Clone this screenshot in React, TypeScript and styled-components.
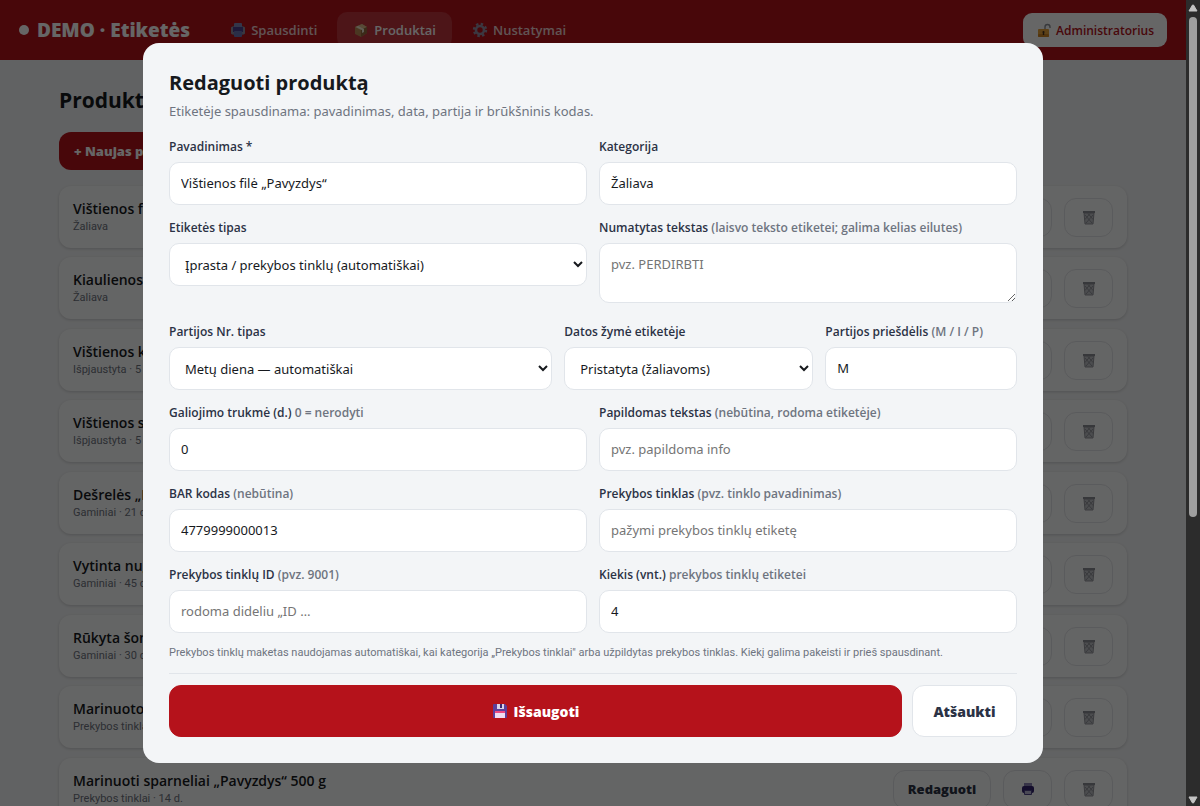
import React, { useId } from "react";
import styled, { createGlobalStyle, css } from "styled-components";

const Global = createGlobalStyle`
  *, *::before, *::after { box-sizing: border-box; }
  body {
    margin: 0;
    background: #f3f5f7;
    color: #16191d;
    font-family: "Open Sans", "Noto Sans", sans-serif;
    font-size: 13px;
  }
  button, input, select, textarea { font-family: inherit; }
  h1, h2, h3, p { margin: 0; }
`;

const red = "#b5121b";
const line = "#e1e5ea";
const ink = "#2b3245";
const muted = "#6e7480";

/* ---------- window frame ---------- */

const Frame = styled.div`
  display: grid;
  grid-template-columns: minmax(0, 1fr) 14px;
  height: 100vh;
  overflow: hidden;
`;

const Viewport = styled.div`
  position: relative;
  overflow: hidden;
`;

const ScrollTrack = styled.div`
  display: flex;
  flex-direction: column;
  align-items: center;
  gap: 5px;
  padding: 4px 0 2px;
  background: #2c2c2c;
`;

const ScrollThumb = styled.div`
  width: 8px;
  height: 62vh;
  margin-bottom: auto;
  border-radius: 4px;
  background: #9f9f9f;
`;

/* ---------- page behind the dialog ---------- */

const TopBar = styled.header`
  display: flex;
  align-items: center;
  gap: 24px;
  height: 60px;
  padding: 0 19px;
  background: ${red};
  color: #fff;
`;

const Brand = styled.div`
  display: flex;
  align-items: center;
  gap: 8px;
  font-size: 19px;
  font-weight: 800;
  line-height: 24px;
  white-space: nowrap;
`;

const BrandDot = styled.span`
  width: 10px;
  height: 10px;
  border-radius: 50%;
  background: #fff;
`;

const Nav = styled.nav`
  display: flex;
  flex: 1;
  gap: 4px;
`;

const NavLink = styled.a<{ $active?: boolean }>`
  display: flex;
  align-items: center;
  gap: 5px;
  height: 36px;
  padding: 0 16px;
  border-radius: 10px;
  color: ${(p) => (p.$active ? "#fff" : "rgba(255, 255, 255, 0.82)")};
  background: ${(p) => (p.$active ? "rgba(255, 255, 255, 0.15)" : "transparent")};
  font-size: 13px;
  font-weight: 600;
  text-decoration: none;
`;

const AdminButton = styled.button`
  display: flex;
  align-items: center;
  gap: 4px;
  height: 34px;
  padding: 0 13px;
  border: 0;
  border-radius: 9px;
  background: #fff;
  color: ${red};
  font-size: 12px;
  font-weight: 600;
`;

const Main = styled.main`
  display: flex;
  flex-direction: column;
  align-items: flex-start;
  max-width: 1100px;
  margin: 0 auto;
  padding: 24px 16px;
`;

const PageTitle = styled.h1`
  font-size: 21px;
  font-weight: 700;
  line-height: 32px;
`;

const NewButton = styled.button`
  height: 38px;
  margin: 16px 0;
  padding: 0 15px;
  border: 0;
  border-radius: 12px;
  background: ${red};
  color: #fff;
  font-size: 13px;
  font-weight: 800;
`;

const List = styled.ul`
  align-self: stretch;
  margin: 0;
  padding: 0;
  list-style: none;
`;

const Row = styled.li`
  display: flex;
  align-items: center;
  gap: 12px;
  height: 62px;
  margin-bottom: 9px;
  padding: 0 14px;
  border-radius: 12px;
  background: #fbfcfc;
  box-shadow: 0 1px 3px rgba(20, 25, 35, 0.18);

  &:nth-child(even) {
    margin-bottom: 10px;
  }
`;

const RowText = styled.div`
  flex: 1;
`;

const RowName = styled.h3`
  font-size: 14px;
  font-weight: 600;
  line-height: 20px;
`;

const RowMeta = styled.p`
  color: ${muted};
  font-family: Roboto, "Open Sans", sans-serif;
  font-size: 11px;
  line-height: 16px;
`;

const RowButton = styled.button<{ $wide?: boolean }>`
  display: flex;
  align-items: center;
  justify-content: center;
  min-width: ${(p) => (p.$wide ? 98 : 49)}px;
  height: 39px;
  border: 1px solid #e1e4e8;
  border-radius: 12px;
  background: #fbfcfc;
  color: ${ink};
  font-size: 13px;
  font-weight: 800;
`;

/* ---------- dialog ---------- */

const Overlay = styled.div`
  position: absolute;
  inset: 0;
  display: flex;
  align-items: center;
  justify-content: center;
  background: rgba(0, 0, 0, 0.6);
`;

const Dialog = styled.form`
  display: flex;
  flex-direction: column;
  width: 100%;
  max-width: 900px;
  padding: 24px 26px 26px;
  border-radius: 16px;
  background: #f3f5f7;
`;

const DialogTitle = styled.h2`
  font-size: 20px;
  font-weight: 700;
  line-height: 32px;
`;

const DialogText = styled.p`
  margin: 2px 0 17px;
  color: ${muted};
  font-family: "Noto Sans", sans-serif;
  line-height: 20px;
`;

const Fields = styled.div`
  display: flex;
  flex-direction: column;
  gap: 14px;
`;

const FieldRow = styled.div<{ $cols?: string }>`
  display: grid;
  grid-template-columns: ${(p) => p.$cols ?? "1fr 1fr"};
  align-items: start;
  gap: 12px;
`;

const FieldBox = styled.div`
  display: flex;
  flex-direction: column;
  gap: 6px;
  min-width: 0;
`;

const Label = styled.label`
  color: ${ink};
  font-size: 12px;
  font-weight: 600;
  line-height: 18px;
  white-space: nowrap;
`;

const LabelNote = styled.span`
  color: ${muted};
`;

const control = css`
  width: 100%;
  height: 43px;
  border: 1px solid ${line};
  border-radius: 10px;
  outline: 0;
  background: #fff;
  color: #16191d;
  font-family: "Noto Sans", sans-serif;
  font-size: 13px;

  &::placeholder {
    color: #757575;
    opacity: 1;
  }
`;

const Input = styled.input`
  ${control}
  padding: 0 11px 1px;
`;

const Select = styled.select`
  ${control}
  padding: 0 0 0 11px;
`;

const TextArea = styled.textarea`
  ${control}
  height: 60px;
  margin-bottom: 6px;
  padding: 11px;
  line-height: 18px;
  resize: vertical;
`;

const Hint = styled.p`
  margin: 12px 0;
  color: ${muted};
  font-family: Roboto, "Open Sans", sans-serif;
  font-size: 11px;
  line-height: 16px;
`;

const Actions = styled.div`
  display: flex;
  gap: 10px;
  padding-top: 11px;
  border-top: 1px solid ${line};
`;

const ActionButton = styled.button<{ $primary?: boolean }>`
  display: flex;
  flex: ${(p) => (p.$primary ? "1" : "0 0 105px")};
  align-items: center;
  justify-content: center;
  gap: 6px;
  height: 52px;
  border: 1px solid ${(p) => (p.$primary ? red : line)};
  border-radius: 12px;
  background: ${(p) => (p.$primary ? red : "#fff")};
  color: ${(p) => (p.$primary ? "#fff" : ink)};
  font-size: 14px;
  font-weight: 800;
`;

/* ---------- icons ---------- */

const PrinterIcon = ({ size = 16 }: { size?: number }) => (
  <svg width={size} height={size} viewBox="0 0 16 16" aria-hidden="true">
    <rect x="1" y="4" width="14" height="9" rx="3" fill="#77728c" />
    <rect x="1" y="5" width="3" height="7" rx="1" fill="#928ca0" />
    <rect x="12" y="5" width="3" height="7" rx="1" fill="#928ca0" />
    <rect x="4" y="1" width="8" height="5" rx="1" fill="#8088b8" />
    <rect x="3" y="5" width="10" height="5" fill="#4b3f8f" />
    <rect x="4" y="9" width="8" height="6" rx="1" fill="#6a74b4" />
  </svg>
);

const SmallPrinterIcon = () => (
  <svg width="14" height="14" viewBox="0 0 14 14" aria-hidden="true">
    <rect x="3" y="1" width="8" height="4" fill="#8a83b4" />
    <rect x="1" y="4" width="12" height="7" rx="2" fill="#33246f" />
    <rect x="3" y="8" width="8" height="5" rx="1" fill="#4e4488" />
    <rect x="4" y="9" width="6" height="3" fill="#b9b6d4" />
  </svg>
);

const BoxIcon = () => (
  <svg width="16" height="16" viewBox="0 0 16 16" aria-hidden="true">
    <path d="M2 5 9 2l5 3v6l-6 4-6-3z" fill="#b98a55" />
    <path d="M2 5 9 2l5 3-6 3z" fill="#dcb98a" />
    <path d="M8 8v7l6-4V5z" fill="#936a3c" />
    <path d="m5 4 6 3v3l-2 1V8L3 5z" fill="#efe6d3" />
  </svg>
);

const GearIcon = () => (
  <svg width="16" height="16" viewBox="0 0 16 16" aria-hidden="true">
    <g fill="none" stroke="#948da3">
      <circle cx="8" cy="8" r="4" strokeWidth="2.6" />
      <circle cx="8" cy="8" r="6" strokeWidth="2.4" strokeDasharray="2.4 2.31" />
    </g>
  </svg>
);

const LockIcon = () => (
  <svg width="16" height="16" viewBox="0 0 16 16" aria-hidden="true">
    <path d="M9 7V5a2.5 2.5 0 0 1 5 0v1" fill="none" stroke="#8d8f96" strokeWidth="1.4" />
    <rect x="2" y="7" width="11" height="8" rx="1" fill="#e9a33a" />
    <rect x="2" y="12" width="11" height="3" rx="1" fill="#cf8425" />
    <path d="M7.5 9a1 1 0 0 1 .7 1.800V13H6.800v-2.200A1 1 0 0 1 7.500 9z" fill="#4a3420" />
  </svg>
);

const SaveIcon = () => (
  <svg width="16" height="16" viewBox="0 0 16 16" aria-hidden="true">
    <path d="M2 1h11l2 2v11a1 1 0 0 1-1 1H2a1 1 0 0 1-1-1V2a1 1 0 0 1 1-1z" fill="#5b3f9c" />
    <rect x="5" y="1" width="7" height="5" fill="#d9d3ea" />
    <rect x="8" y="1" width="2" height="4" fill="#3b2a72" />
    <rect x="3" y="8" width="10" height="7" fill="#f0dcf2" />
    <rect x="3" y="8" width="10" height="2" fill="#ee4a82" />
  </svg>
);

const TrashIcon = () => (
  <svg width="14" height="15" viewBox="0 0 14 15" aria-hidden="true">
    <path d="M2 3h10l-1 11H3z" fill="#bfc1c6" />
    <rect x="1" y="1" width="12" height="2" fill="#8a8c93" />
    <g stroke="#8a8c93" strokeWidth="0.9" fill="none">
      <path d="M2 3h10l-1 11H3z" />
      <path d="m3 5 7 8M6 3.500l5 6M11 5l-7 8M8 3.500l-5 6" />
    </g>
  </svg>
);

const ArrowIcon = ({ down }: { down?: boolean }) => (
  <svg width="10" height="8" viewBox="0 0 10 8" aria-hidden="true">
    <path d={down ? "M1 1h8L5.500 7h-1z" : "M1 7h8L5.500 1h-1z"} fill="#c4c4c4" stroke="#c4c4c4" strokeLinejoin="round" />
  </svg>
);

/* ---------- form field ---------- */

type FieldProps = {
  label: string;
  note?: string;
  kind?: "input" | "select" | "textarea";
  value?: string;
  placeholder?: string;
};

function Field({ label, note, kind = "input", value, placeholder }: FieldProps) {
  const id = useId();
  return (
    <FieldBox>
      <Label htmlFor={id}>
        {label}
        {note && <LabelNote> {note}</LabelNote>}
      </Label>
      {kind === "input" && <Input id={id} defaultValue={value} placeholder={placeholder} />}
      {kind === "textarea" && <TextArea id={id} defaultValue={value} placeholder={placeholder} />}
      {kind === "select" && (
        <Select id={id}>
          <option>{value}</option>
        </Select>
      )}
    </FieldBox>
  );
}

const products = [
  { name: "Vištienos filė", meta: "Žaliava" },
  { name: "Kiaulienos", meta: "Žaliava" },
  { name: "Vištienos ketv.", meta: "Išpjaustyta · 5 d." },
  { name: "Vištienos sp.", meta: "Išpjaustyta · 5 d." },
  { name: "Dešrelės „P“", meta: "Gaminiai · 21 d." },
  { name: "Vytinta nugarinė", meta: "Gaminiai · 45 d." },
  { name: "Rūkyta šoninė", meta: "Gaminiai · 30 d." },
  { name: "Marinuotos", meta: "Prekybos tinklai" },
  { name: "Marinuoti sparneliai „Pavyzdys“ 500 g", meta: "Prekybos tinklai · 14 d." },
];

export default function App() {
  return (
    <Frame>
      <Global />
      <Viewport>
        <TopBar>
          <Brand>
            <BrandDot />
            DEMO · Etiketės
          </Brand>
          <Nav>
            <NavLink href="#spausdinti"><PrinterIcon />Spausdinti</NavLink>
            <NavLink href="#produktai" $active><BoxIcon />Produktai</NavLink>
            <NavLink href="#nustatymai"><GearIcon />Nustatymai</NavLink>
          </Nav>
          <AdminButton type="button"><LockIcon />Administratorius</AdminButton>
        </TopBar>
        <Main>
          <PageTitle>Produktai</PageTitle>
          <NewButton type="button">+ Naujas produktas</NewButton>
          <List>
            {products.map((p) => (
              <Row key={p.name}>
                <RowText>
                  <RowName>{p.name}</RowName>
                  <RowMeta>{p.meta}</RowMeta>
                </RowText>
                <RowButton type="button" $wide>Redaguoti</RowButton>
                <RowButton type="button" aria-label="Spausdinti"><SmallPrinterIcon /></RowButton>
                <RowButton type="button" aria-label="Ištrinti"><TrashIcon /></RowButton>
              </Row>
            ))}
          </List>
        </Main>
        <Overlay>
          <Dialog role="dialog" aria-modal="true" aria-labelledby="dialog-title">
            <DialogTitle id="dialog-title">Redaguoti produktą</DialogTitle>
            <DialogText>Etiketėje spausdinama: pavadinimas, data, partija ir brūkšninis kodas.</DialogText>
            <Fields>
              <FieldRow>
                <Field label="Pavadinimas *" value="Vištienos filė „Pavyzdys“" />
                <Field label="Kategorija" value="Žaliava" />
              </FieldRow>
              <FieldRow>
                <Field label="Etiketės tipas" kind="select" value="Įprasta / prekybos tinklų (automatiškai)" />
                <Field
                  label="Numatytas tekstas"
                  note="(laisvo teksto etiketei; galima kelias eilutes)"
                  kind="textarea"
                  placeholder="pvz. PERDIRBTI"
                />
              </FieldRow>
              <FieldRow $cols="20fr 13fr 10fr">
                <Field label="Partijos Nr. tipas" kind="select" value="Metų diena — automatiškai" />
                <Field label="Datos žymė etiketėje" kind="select" value="Pristatyta (žaliavoms)" />
                <Field label="Partijos priešdėlis" note="(M / I / P)" value="M" />
              </FieldRow>
              <FieldRow>
                <Field label="Galiojimo trukmė (d.)" note="0 = nerodyti" value="0" />
                <Field label="Papildomas tekstas" note="(nebūtina, rodoma etiketėje)" placeholder="pvz. papildoma info" />
              </FieldRow>
              <FieldRow>
                <Field label="BAR kodas" note="(nebūtina)" value="4779999000013" />
                <Field label="Prekybos tinklas" note="(pvz. tinklo pavadinimas)" placeholder="pažymi prekybos tinklų etiketę" />
              </FieldRow>
              <FieldRow>
                <Field label="Prekybos tinklų ID" note="(pvz. 9001)" placeholder="rodoma dideliu „ID …" />
                <Field label="Kiekis (vnt.)" note="prekybos tinklų etiketei" value="4" />
              </FieldRow>
            </Fields>
            <Hint>
              Prekybos tinklų maketas naudojamas automatiškai, kai kategorija „Prekybos tinklai" arba užpildytas prekybos
              tinklas. Kiekį galima pakeisti ir prieš spausdinant.
            </Hint>
            <Actions>
              <ActionButton type="submit" $primary><SaveIcon />Išsaugoti</ActionButton>
              <ActionButton type="button">Atšaukti</ActionButton>
            </Actions>
          </Dialog>
        </Overlay>
      </Viewport>
      <ScrollTrack aria-hidden="true">
        <ArrowIcon />
        <ScrollThumb />
        <ArrowIcon down />
      </ScrollTrack>
    </Frame>
  );
}
